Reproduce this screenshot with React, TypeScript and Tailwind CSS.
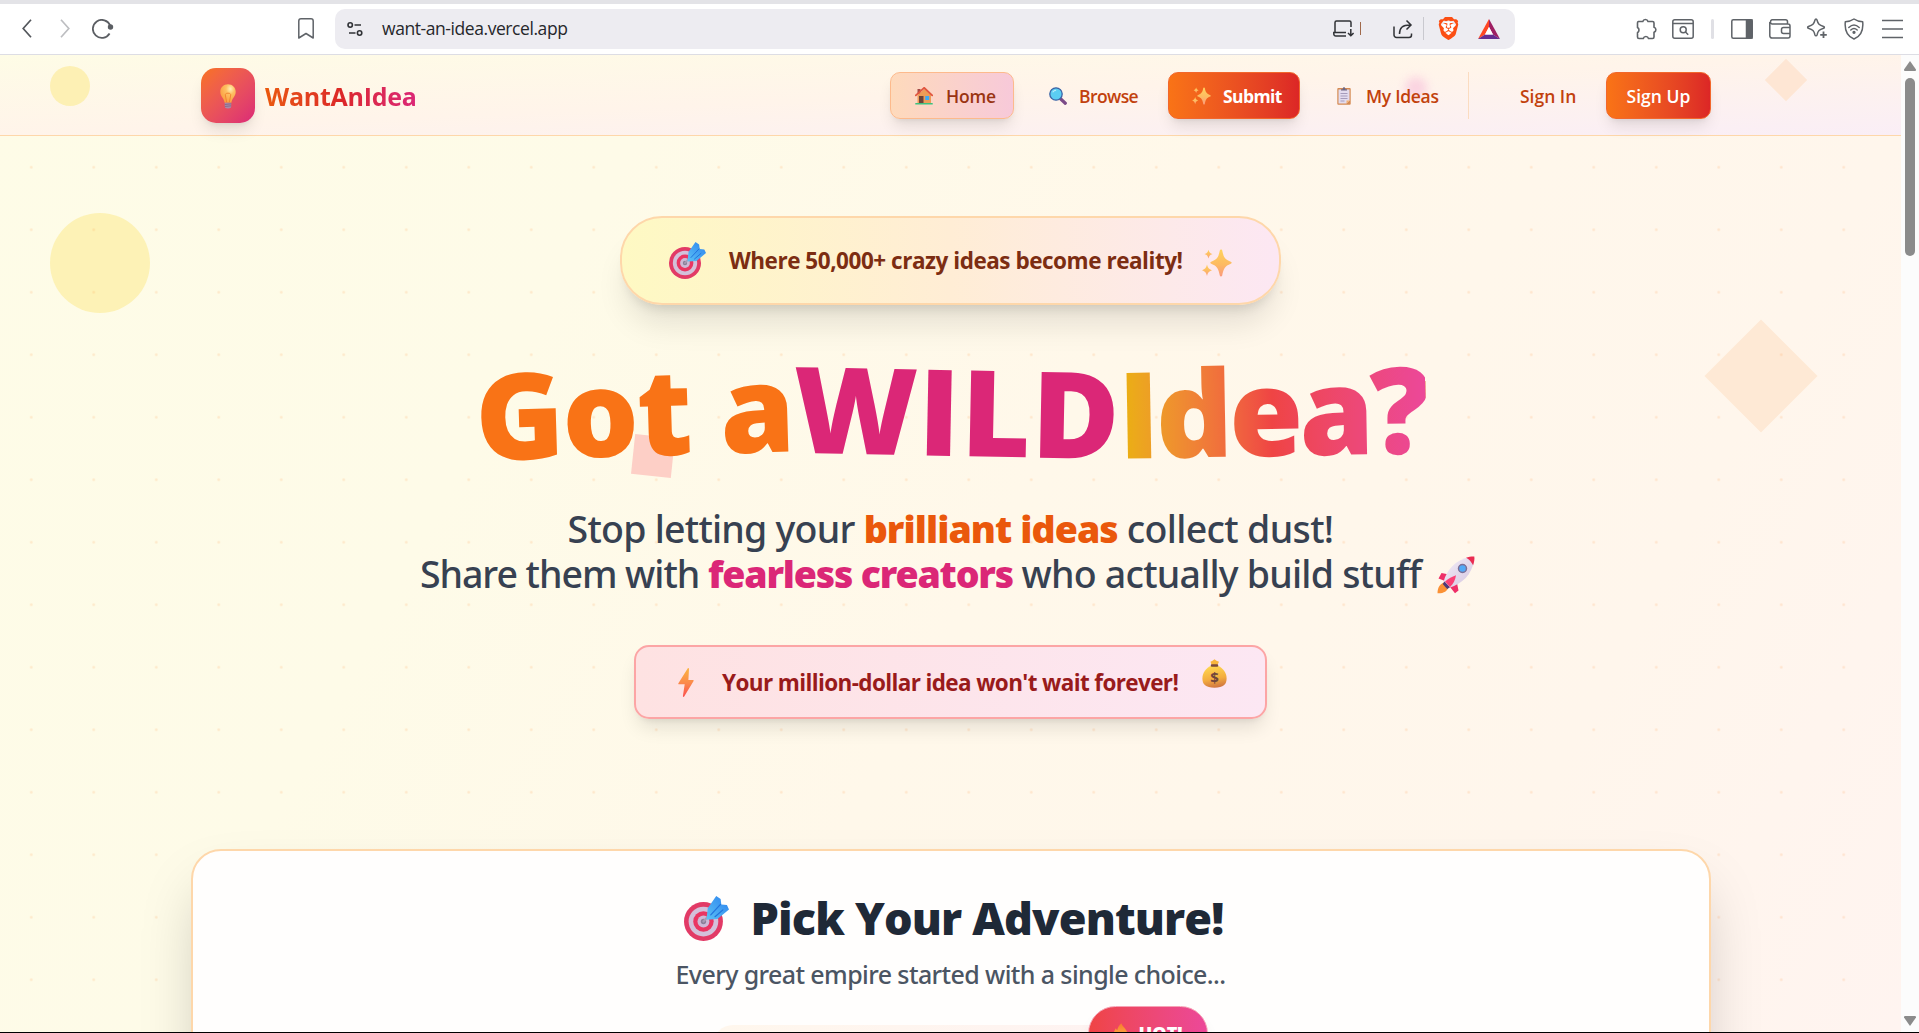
import React from 'react';
import { SiBrave } from 'react-icons/si';

interface IconProps {
  className?: string;
}

/* ---------- emoji artwork ---------- */

// Gradients shared by all the emoji below
const EmojiDefs = () => (
  <svg width="0" height="0" className="absolute">
    <defs>
      <linearGradient id="spark" x1="0" y1="0" x2="0" y2="1">
        <stop offset="0" stopColor="#ffd25c" />
        <stop offset="0.55" stopColor="#fdbb62" />
        <stop offset="1" stopColor="#fb9a7c" />
      </linearGradient>
      <linearGradient id="bolt" x1="0" y1="0" x2="0" y2="1">
        <stop offset="0" stopColor="#fbb540" />
        <stop offset="0.5" stopColor="#fb8b4b" />
        <stop offset="1" stopColor="#fb4f4f" />
      </linearGradient>
      <linearGradient id="fletch" x1="0" y1="1" x2="1" y2="0">
        <stop offset="0" stopColor="#5cc3f5" />
        <stop offset="1" stopColor="#2a80ee" />
      </linearGradient>
      <linearGradient id="hull" x1="0" y1="0" x2="1" y2="1">
        <stop offset="0" stopColor="#f4eef8" />
        <stop offset="1" stopColor="#d3c4df" />
      </linearGradient>
      <radialGradient id="bulb" cx="0.65" cy="0.25" r="0.8">
        <stop offset="0" stopColor="#fff0b8" />
        <stop offset="0.35" stopColor="#fec063" />
        <stop offset="1" stopColor="#fa9a3c" />
      </radialGradient>
      <linearGradient id="bag" x1="0.4" y1="0" x2="0.6" y2="1">
        <stop offset="0" stopColor="#ffd84f" />
        <stop offset="0.6" stopColor="#f3ac3f" />
        <stop offset="1" stopColor="#cf7440" />
      </linearGradient>
      <linearGradient id="flame" x1="0" y1="0" x2="0" y2="1">
        <stop offset="0" stopColor="#f77a2e" />
        <stop offset="1" stopColor="#ffc04a" />
      </linearGradient>
    </defs>
  </svg>
);

const Target: React.FC<IconProps> = ({ className }) => (
  <svg viewBox="0 0 37 37" className={className}>
    <circle cx="16" cy="21" r="16" fill="#e23a66" />
    <circle cx="16" cy="21" r="12.2" fill="#d3c0da" />
    <circle cx="16" cy="21" r="8.4" fill="#ea3562" />
    <circle cx="16" cy="21" r="4.9" fill="#cdb9d6" />
    <circle cx="16" cy="21" r="2.2" fill="#8b7f98" />
    <path d="M16 21L25 11" stroke="#a99bb5" strokeWidth="1.8" strokeLinecap="round" />
    <path d="M18.500 19.500l1-9.500L26.500 0l3.600 2.400.6 4.600 4.600.5 1.700 3.500-9.500 8z" fill="url(#fletch)" strokeLinejoin="round" />
    <path d="M22 15.500l8-8.600M25.500 17l6.500-5.600" stroke="#2273dc" strokeWidth="1" strokeLinecap="round" />
  </svg>
);

const Sparkles: React.FC<IconProps> = ({ className }) => (
  <svg viewBox="0 0 30 28" className={className} fill="url(#spark)">
    <path d="M19 .5c.7 0 1 .4 1.200 1 1.300 6.500 2.600 9 8.600 11.200 1.200.5 1.200 1.500 0 2-6 2.300-7.300 5-8.600 11.800-.2 1.200-2.200 1.200-2.400 0-1.300-6.800-2.600-9.500-8.600-11.800-1.200-.5-1.200-1.500 0-2 6-2.200 7.300-4.700 8.600-11.200.2-.6.500-1 1.200-1z" />
    <path d="M6.500.7c.8 2.700 1.400 3.400 4 4.300-2.600.9-3.200 1.700-4 4.600-.8-2.900-1.400-3.700-4-4.600 2.600-.9 3.200-1.600 4-4.300z" />
    <path d="M5 15.500c1 3.500 1.700 4.500 5 5.700-3.300 1.200-4 2.200-5 5.800-1-3.600-1.700-4.600-5-5.800 3.300-1.200 4-2.200 5-5.700z" />
  </svg>
);

const House: React.FC<IconProps> = ({ className }) => (
  <svg viewBox="0 0 18 18" className={className}>
    <path d="M2.500 2h3v5h-3z" fill="#a34a46" />
    <path d="M2.500 8L9.500 2l6.500 6v8.500H2.500z" fill="#ee9c58" />
    <path d="M.8 8.300L9.200.8l8 7.500" fill="none" stroke="#e0553f" strokeWidth="1.800" strokeLinecap="round" />
    <path d="M4 9h4.500v7.500H4z" fill="#6e4338" />
    <path d="M10.200 9h4v4h-4z" fill="#3fa9f5" />
    <path d="M.3 16h17.400v1.500H.3z" fill="#3dc27e" />
  </svg>
);

const Magnifier: React.FC<IconProps> = ({ className }) => (
  <svg viewBox="0 0 18 18" className={className}>
    <path d="M11.500 11.800l4.800 4.400" stroke="#7b4a87" strokeWidth="3.200" strokeLinecap="round" />
    <circle cx="7" cy="7" r="6.200" fill="#5bcdf2" stroke="#3c62a4" strokeWidth="1.300" />
    <path d="M4 4.800c.8-1 1.600-1.300 2.600-1.400" stroke="#b5ecfb" strokeWidth="1.200" strokeLinecap="round" fill="none" />
  </svg>
);

const Clipboard: React.FC<IconProps> = ({ className }) => (
  <svg viewBox="0 0 14 18" className={className}>
    <rect x=".3" y="1" width="13.400" height="16.700" rx="1" fill="#d58a52" />
    <path d="M1.500 2.500h11v11l-3 3h-8z" fill="#e3dcee" />
    <path d="M12.500 13.500l-3 3v-3z" fill="#f7b06c" />
    <path d="M4 3.600V2.200h1.600C5.700.8 6.200.3 7 .3s1.300.5 1.400 1.900H10v1.400z" fill="#6f6781" />
    <path d="M3.500 6.500h7M3.500 9h7M3.500 11.500h7M3.500 14h4" stroke="#9f94b4" strokeWidth=".9" />
  </svg>
);

const Bulb: React.FC<IconProps> = ({ className }) => (
  <svg viewBox="0 0 16 25" className={className}>
    <path d="M8 .3c4.500 0 7.700 3.300 7.700 7.500 0 4.800-3.600 6-4.300 11H4.600C3.900 13.800.3 12.600.3 7.800.3 3.600 3.500.3 8 .3z" fill="url(#bulb)" />
    <path d="M6.700 18.500l-1.500-8c.6-1.800 5-1.800 5.600 0l-1.500 8" fill="none" stroke="#f0802c" strokeWidth=".9" />
    <path d="M4.800 18.800h6.400v3.800c0 1-.9 2-3.200 2s-3.200-1-3.200-2z" fill="#a98ba8" />
    <path d="M4.800 20.500l6.400-.7M4.800 22.500l6.400-.7" stroke="#7d5d7d" strokeWidth=".7" />
  </svg>
);

const Rocket: React.FC<IconProps> = ({ className }) => (
  <svg viewBox="0 0 38 38" className={className}>
    <path d="M8 26c-5 2-7.500 5-7.500 11.300 6.500.2 9.500-2 11.500-6.800z" fill="#fb9135" />
    <path d="M12 18.500L4.500 17 1.500 22.500l6.500 2.600zM20 27l1.500 7.500-3.500 2.800L13 31z" fill="#ee2f68" />
    <path d="M6.500 26c3-12 12-22.500 27-25l3.500 3.300c-2 14.500-12 23.500-24.500 27.500z" fill="url(#hull)" />
    <path d="M29 1.800C32 .8 35.500.3 37.300.6c.5 2.200-.2 6-1.200 8.700C34.500 6 32 3.200 29 1.800z" fill="#ea2b51" />
    <path d="M7.500 25.500l5.500 5.800-2.800 1.600-4.500-4.800z" fill="#4d3b78" />
    <path d="M8 25.500c3.500-2.800 7-5 11-6.300-.8 5-2.500 8.700-6 11.800z" fill="#fb4076" />
    <circle cx="25.500" cy="12.500" r="4" fill="#52a9f6" stroke="#7d6f96" strokeWidth="1.500" />
  </svg>
);

const Bolt: React.FC<IconProps> = ({ className }) => (
  <svg viewBox="0 0 16 29" className={className}>
    <path d="M9.800.3L.4 15.300c-.3.600 0 1 .6 1h5.700l-1.800 11.800c-.1.900.8 1.200 1.300.4L15.600 13c.3-.6 0-1-.6-1h-4.600L11 1c0-.9-.8-1.200-1.200-.7z" fill="url(#bolt)" />
  </svg>
);

const MoneyBag: React.FC<IconProps> = ({ className }) => (
  <svg viewBox="0 0 25 29" className={className}>
    <path d="M8.500 2.800l2-1 2-1.600 2 1.600 2.500 1-2 4.200h-5z" fill="#f8b63e" />
    <path d="M9.500 6.500C4 9 .4 13.500.4 19.500c0 6 3.200 9.200 12.100 9.200s12.100-3.200 12.100-9.200c0-6-3.600-10.500-9.100-13z" fill="url(#bag)" />
    <rect x="8.800" y="5.300" width="7.400" height="2.400" rx="1" fill="#7a4a3c" />
    <text x="12.500" y="24" textAnchor="middle" fontSize="15" fontWeight="700" fontFamily="Open Sans, sans-serif" fill="#70463c">$</text>
  </svg>
);

const Flame: React.FC<IconProps> = ({ className }) => (
  <svg viewBox="0 0 16 20" className={className}>
    <path d="M9 0c.5 3.500 6.500 6 6.500 12.300C15.500 17 12 20 8 20S.5 17 .5 12.500C.5 9.500 2 7.500 3 5.500c.5 1 .8 1.500 1.500 2C5 4.500 6.500 2 9 0z" fill="url(#flame)" />
  </svg>
);

/* ---------- browser toolbar ---------- */

const Toolbar = () => (
  <div className="flex h-[55px] shrink-0 items-center border-t-4 border-b border-t-[#e3e3e7] border-b-[#dddde4] bg-white pb-px text-[#5f6368]">
    <svg viewBox="0 0 10 19" className="ml-[22px] h-[19px] w-[10px]" fill="none" stroke="#54575c" strokeWidth="1.700">
      <path d="M9 .8L1.200 9.500 9 18.200" />
    </svg>
    <svg viewBox="0 0 10 19" className="ml-[28px] h-[19px] w-[10px]" fill="none" stroke="#bdbec1" strokeWidth="1.700">
      <path d="M1 .8l7.800 8.700L1 18.200" />
    </svg>
    <svg viewBox="0 0 22 20" className="ml-[22px] h-[20px] w-[22px]" fill="none" stroke="#5b5e63" strokeWidth="1.800">
      <path d="M17.600 14.500A9 9 0 1 1 18.200 6.500" />
      <circle cx="18.500" cy="8" r="2.700" fill="#5b5e63" stroke="none" />
    </svg>
    <svg viewBox="0 0 16 21" className="ml-[184px] h-[21px] w-[16px]" fill="none" stroke="currentColor" strokeWidth="1.500" strokeLinejoin="round">
      <path d="M.8 20V3A2.200 2.200 0 0 1 3 .8h10A2.200 2.200 0 0 1 15.200 3v17L8 15.500z" />
    </svg>

    <div className="ml-[21px] flex h-[40px] w-[1180px] items-center rounded-[10px] bg-[#edecf1] text-[#303236]">
      <svg viewBox="0 0 16 14" className="ml-[12px] h-[14px] w-[16px]" fill="none" stroke="currentColor" strokeWidth="1.600">
        <circle cx="3.200" cy="3" r="2.200" />
        <path d="M7.500 3H14M2 11h6.500" />
        <circle cx="12.600" cy="11" r="2.200" />
      </svg>
      <span className="mt-px ml-[19px] text-[17.5px] leading-none tracking-[-0.43px] text-[#26272b]">want-an-idea.vercel.app</span>
      <svg viewBox="0 0 21 17" className="ml-auto h-[17px] w-[21px]" fill="none" stroke="currentColor" strokeWidth="1.500">
        <path d="M18 7V2.500A1.500 1.500 0 0 0 16.500 1h-13A1.500 1.500 0 0 0 2 2.500V12M13 12.500H.8V14a2 2 0 0 0 2 2H13M17.800 9v6.500M15 13l2.800 2.800 2.800-2.800" />
      </svg>
      <span className="ml-[6px] h-[13px] w-px bg-[#a0694b]" />
      <svg viewBox="0 0 20 20" className="ml-[32px] h-[20px] w-[20px]" fill="none" stroke="currentColor" strokeWidth="1.500">
        <path d="M1 7.500V16a2.500 2.500 0 0 0 2.500 2.500h12.500a2.500 2.500 0 0 0 2.500-2.500v-1.500M6.500 15c0-6 2.500-9 11-9M13.500 1.500L18 6l-4.500 4.500" />
      </svg>
      <span className="ml-[10px] h-[23px] w-px bg-[#c9c9cf]" />
      <SiBrave className="ml-[13px] h-[23px] w-[23px] bg-[radial-gradient(white_42%,transparent_44%)] text-[#fb4f14]" />
      <svg viewBox="0 0 22 20" className="mr-[15px] ml-[18px] h-[20px] w-[22px]">
        <path d="M11 0L0 20l7-4.500 4-7.500z" fill="#ff4724" />
        <path d="M11 0l11 20-7-4.500L11 8z" fill="#9e1f63" />
        <path d="M0 20h22l-7-4.500H7z" fill="#662d91" />
        <path d="M11 8l4 7.500H7z" fill="#fff" />
      </svg>
    </div>

    <svg viewBox="0 0 22 22" className="ml-[120px] h-[22px] w-[22px]" fill="none" stroke="currentColor" strokeWidth="1.600" strokeLinejoin="round">
      <path d="M3.500 3.500h4.300a2.700 2.700 0 0 1 5.200 0h4.500A1.500 1.500 0 0 1 19 5v4.200a2.600 2.600 0 0 1 0 5V19a1.500 1.500 0 0 1-1.500 1.500h-4a2.700 2.700 0 0 0-5.200 0H4A1.500 1.500 0 0 1 2.500 19v-4.300a3 3 0 0 0 0-5.200V5a1.500 1.500 0 0 1 1-1.500z" />
    </svg>
    <svg viewBox="0 0 22 20" className="ml-[15px] h-[20px] w-[22px]" fill="none" stroke="currentColor" strokeWidth="1.500">
      <rect x=".8" y=".8" width="20.400" height="18.400" rx="2" />
      <path d="M1 4.500h20M13.500 13l2.700 2.700" />
      <circle cx="11.200" cy="10.800" r="3" />
    </svg>
    <span className="ml-[17px] h-[20px] w-[3px] rounded bg-[#e0e0e5]" />
    <svg viewBox="0 0 22 20" className="ml-[17px] h-[20px] w-[22px]" fill="none" stroke="currentColor" strokeWidth="1.500">
      <rect x=".8" y=".8" width="20.400" height="18.400" rx="1.500" />
      <path d="M15.500 1H21v18h-5.500z" fill="currentColor" />
    </svg>
    <svg viewBox="0 0 22 20" className="ml-[16px] h-[20px] w-[22px]" fill="none" stroke="currentColor" strokeWidth="1.500">
      <path d="M18.500 4.500V2.800a2 2 0 0 0-2-2H3a2.200 2.200 0 0 0 0 4.200h16a2 2 0 0 1 2 2v10a2 2 0 0 1-2 2H3a2.200 2.200 0 0 1-2.200-2.200V3" />
      <path d="M21 8.500h-6.500a2 2 0 0 0-2 2v2a2 2 0 0 0 2 2H21" />
    </svg>
    <svg viewBox="0 0 22 21" className="ml-[15px] h-[21px] w-[22px]" fill="none" stroke="currentColor" strokeWidth="1.500" strokeLinejoin="round">
      <path d="M10 1c.6 0 .8.400 1 1 1 3.900 2.200 5.200 6.600 6.500 1 .3 1 1.500 0 1.800-4.400 1.300-5.600 2.600-6.600 6.700-.3 1-1.700 1-2 0C8 12.900 6.800 11.600 2.400 10.300c-1-.3-1-1.500 0-1.800C6.800 7.200 8 5.900 9 2c.2-.6.400-1 1-1z" />
      <path d="M17.500 13.500v6.500M14.200 16.800h6.600" strokeWidth="1.800" />
    </svg>
    <svg viewBox="0 0 20 22" className="ml-[16px] h-[22px] w-[20px]" fill="none" stroke="currentColor" strokeWidth="1.500" strokeLinejoin="round" strokeLinecap="round">
      <path d="M10 1c2.500 1.800 5 2.600 8.700 2.800C19.500 12 17.500 18 10 21 2.500 18 .5 12 1.300 3.800 5 3.600 7.500 2.800 10 1z" />
      <path d="M4.800 9.500c3.200-3 7.200-3 10.400 0M6.800 12c2-1.800 4.400-1.800 6.400 0" />
      <circle cx="10" cy="14.300" r=".9" fill="currentColor" />
    </svg>
    <svg viewBox="0 0 21 20" className="ml-[18px] h-[20px] w-[21px]" stroke="currentColor" strokeWidth="1.700">
      <path d="M0 1.500h21M0 10h21M0 18.500h21" />
    </svg>
  </div>
);

const Scrollbar = () => (
  <div className="flex w-[18px] shrink-0 flex-col items-center bg-[#fcfcfc] py-[6px]">
    <svg viewBox="0 0 12 10" className="h-[10px] w-[12px] fill-[#8b8b8b]">
      <path d="M6 0l6 8.500c0 1-.5 1.500-1 1.500H1c-.5 0-1-.5-1-1.500z" />
    </svg>
    <div className="mt-[7px] h-[178px] w-[10px] rounded-full bg-[#8b8b8b]" />
    <svg viewBox="0 0 12 10" className="mt-auto h-[10px] w-[12px] fill-[#8b8b8b]">
      <path d="M6 10l6-8.500C12 .5 11.500 0 11 0H1C.5 0 0 .5 0 1.500z" />
    </svg>
  </div>
);

/* ---------- site ---------- */

const Header = () => (
  <header className="relative flex h-[81px] shrink-0 items-center border-b border-[#fed7aa] bg-linear-to-br from-[#fefce6] via-[#fff4ea] to-[#faeef6] pr-[190px] pl-[201px]">
    <div className="absolute top-[11px] left-[50px] h-[40px] w-[40px] rounded-full bg-[#fdf0b4]" />
    <div className="absolute top-[10px] left-[1771px] h-[30px] w-[30px] rotate-45 bg-[#fee6d4]" />
    <div className="absolute top-[22px] left-[1405px] h-[22px] w-[22px] rounded-full bg-[#f9c6dc] opacity-70 blur-[5px]" />

    <div className="flex h-[55px] w-[54px] items-center justify-center rounded-[15px] bg-linear-to-br from-[#f97316] to-[#db2777] shadow-lg">
      <Bulb className="mt-[3px] h-[25px] w-[16px]" />
    </div>
    <span className="mt-[3px] ml-[10px] bg-linear-to-r from-[#ea580c] via-[#dc2626] to-[#db2777] bg-clip-text text-[25px] leading-[35px] font-bold tracking-[-0.25px] text-transparent">
      WantAnIdea
    </span>

    <nav className="relative ml-auto flex h-[47px] gap-[10px] text-[17.5px] font-semibold text-[#c2410c]">
      <a className="flex w-[124px] items-center gap-[13px] rounded-[10px] border border-[#fdba8c] bg-linear-to-r from-[#fedabb] to-[#f7c9d9] pt-[2px] pl-[24px] tracking-[-0.2px] text-[#9a3412] shadow-lg">
        <House className="h-[18px] w-[18px]" />
        Home
      </a>
      <a className="flex w-[134px] items-center gap-[12px] pt-[2px] pl-[25px] tracking-[-0.6px]">
        <Magnifier className="h-[18px] w-[18px]" />
        Browse
      </a>
      <a className="flex w-[132px] items-center gap-[12px] rounded-[10px] border border-[#f2672c] bg-linear-to-r from-[#f97316] to-[#dc2626] pt-[2px] pl-[23px] font-bold tracking-[-0.6px] text-white shadow-lg">
        <Sparkles className="h-[18px] w-[19px]" />
        Submit
      </a>
      <a className="flex w-[148px] items-center gap-[15px] pt-[2px] pl-[27px] tracking-[-0.3px]">
        <Clipboard className="h-[18px] w-[14px]" />
        My Ideas
      </a>
      <span className="w-px bg-[#fbdcc0]" />
      <a className="flex w-[117px] items-center pt-[2px] pl-[41px]">Sign In</a>
      <a className="flex w-[105px] items-center justify-center rounded-[10px] border border-[#f2672c] bg-linear-to-r from-[#f97316] to-[#dc2626] pt-[2px] text-white shadow-lg">
        Sign Up
      </a>
    </nav>
  </header>
);

const Hero = () => (
  <section className="relative flex flex-col items-center">
    <div className="flex h-[89px] w-[661px] items-center rounded-[42px] border-2 border-[#fed7aa] bg-linear-to-r from-[#fef9c3] via-[#ffedd5] to-[#fce7f3] pl-[47px] text-[22.5px] font-bold text-[#7c2d12] shadow-[0_25px_31px_-6px_rgba(0,0,0,0.1),0_10px_12px_-7px_rgba(0,0,0,0.12)]">
      <Target className="h-[37px] w-[37px]" />
      <span className="mt-px ml-[23px] tracking-[-0.47px] whitespace-nowrap">Where 50,000+ crazy ideas become reality!</span>
      <Sparkles className="mt-[4px] ml-[20px] h-[28px] w-[30px]" />
    </div>

    <h1 className="mt-[45px] flex h-[120px] text-[120px] leading-[120px] font-extrabold whitespace-nowrap">
      <span className="inline-block -rotate-[1.7deg] tracking-[-1.7px] text-[#f97316]">Got a</span>
      <span className="inline-block rotate-[1.1deg] tracking-[0.8px] text-[#db2777]">WILD</span>
      <span className="-ml-[3px] inline-block -rotate-1 bg-linear-to-r from-[#eab308] via-[#ef4444] to-[#ec4899] bg-clip-text tracking-[-4px] text-transparent">
        Idea?
      </span>
    </h1>

    <p className="mt-[36px] text-center font-['Noto_Sans','Open_Sans',sans-serif] text-[37.5px] leading-[45px] font-medium whitespace-nowrap text-[#374151]">
      <span className="tracking-[-0.76px]">Stop letting your </span>
      <span className="font-black tracking-[-0.92px] text-[#ea580c]">brilliant ideas </span>
      <span className="tracking-[-0.65px]">collect dust!</span>
      <br />
      <span className="tracking-[-1.04px]">Share them with </span>
      <span className="font-black tracking-[-1.18px] text-[#db2777]">fearless creators </span>
      <span className="tracking-[-0.78px]">who actually build stuff</span>
      <Rocket className="mr-[6px] ml-[16px] inline-block h-[38px] w-[38px] align-[-6px]" />
    </p>

    <div className="mt-[49px] flex h-[74px] w-[633px] items-center rounded-[15px] border-2 border-[#fca5a5] bg-linear-to-r from-[#fee2e2] to-[#fce7f3] pl-[42px] text-[22.5px] font-bold text-[#991b1b] shadow-[0_12px_19px_-4px_rgba(0,0,0,0.11),0_5px_7px_-5px_rgba(0,0,0,0.1)]">
      <Bolt className="h-[29px] w-[16px]" />
      <span className="mt-[2px] ml-[28px] tracking-[-0.62px] whitespace-nowrap">Your million-dollar idea won't wait forever!</span>
      <MoneyBag className="mb-[17px] ml-[24px] h-[29px] w-[25px]" />
    </div>
  </section>
);

const Adventure = () => (
  <section className="relative mt-[130px] flex h-[500px] w-[1520px] shrink-0 flex-col items-center rounded-[30px] border-2 border-[#fed7aa] bg-[#fffefd] pt-[42px] shadow-[0_31px_62px_-15px_rgba(0,0,0,0.25)]">
    <h2 className="ml-[7px] flex h-[50px] items-center text-[45px] leading-[50px] font-extrabold whitespace-nowrap text-[#1f2937]">
      <Target className="mr-[21px] h-[45px] w-[45px]" />
      <span className="tracking-[-0.85px]">Pick Your Adventure!</span>
    </h2>
    <p className="mt-[13px] font-['Noto_Sans','Open_Sans',sans-serif] text-[25px] leading-[36px] font-medium tracking-[-0.6px] whitespace-nowrap text-[#4b5563]">
      Every great empire started with a single choice...
    </p>
    <div className="relative mt-[33px] h-[300px] w-[476px] rounded-[20px] bg-linear-to-r from-[#fff7ed] to-[#fef2f2]">
      <div className="absolute -top-[19px] -right-[19px] flex h-[55px] w-[120px] items-center justify-center gap-[11px] rounded-full border border-[#f6a3b5] bg-linear-to-r from-[#ef4444] to-[#ec4899] text-[18px] font-extrabold text-white shadow-lg">
        <Flame className="mb-[3px] h-[19px] w-[15px]" />
        HOT!
      </div>
    </div>
  </section>
);

// Loose shapes and the dot grid behind the page content
const Backdrop = () => (
  <div className="pointer-events-none absolute inset-0">
    <div className="absolute top-[158px] left-[50px] h-[100px] w-[100px] rounded-full bg-[#fdf2b6]" />
    <div className="absolute top-[281px] left-[1721px] h-[80px] w-[80px] rotate-45 bg-[#fee9d5]" />
    <div className="absolute top-[381px] left-[633px] h-[40px] w-[40px] rotate-6 bg-[#fdcfc6]" />
    <div className="absolute inset-0 bg-[radial-gradient(circle_at_center,rgba(251,146,60,0.18)_0.8px,transparent_1.8px)] bg-size-[62.5px_62.5px] bg-position-[0px_18.5px]" />
  </div>
);

export default function App() {
  return (
    <div className="flex h-[1033px] w-full flex-col overflow-hidden border-b border-black font-['Open_Sans','Noto_Sans',sans-serif]">
      <EmojiDefs />
      <Toolbar />
      <div className="flex min-h-0 flex-1">
        <div className="relative flex min-w-0 flex-1 flex-col overflow-hidden bg-[linear-gradient(118deg,#fefce7_0%,#fefbe8_28%,#fff8ea_52%,#fff6ec_80%,#fff4f0_100%)]">
          <Backdrop />
          <Header />
          <main className="flex flex-col items-center pt-[80px]">
            <Hero />
            <Adventure />
          </main>
        </div>
        <Scrollbar />
      </div>
    </div>
  );
}
